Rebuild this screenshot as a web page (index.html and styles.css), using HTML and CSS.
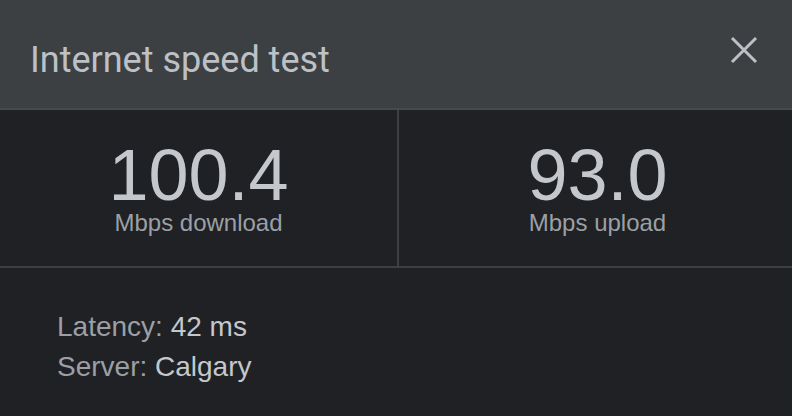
FILE: index.html
```html
<!DOCTYPE html>
<html>
<head>
<meta charset="utf-8">
<link rel="stylesheet" href="styles.css">
</head>
<body>
<div class="dialog">
  <header class="header">
    <h1 class="title">Internet speed test</h1>
    <button class="close" aria-label="Close">
      <svg width="28" height="28" viewBox="0 0 28 28"><path d="M2 2 L26 26 M26 2 L2 26" stroke="#bdc1c6" stroke-width="3" fill="none"/></svg>
    </button>
  </header>
  <section class="stats">
    <div class="stat">
      <div class="value">100.4</div>
      <div class="unit">Mbps download</div>
    </div>
    <div class="stat stat-right">
      <div class="value">93.0</div>
      <div class="unit">Mbps upload</div>
    </div>
  </section>
  <section class="details">
    <div class="row"><span class="label">Latency:</span> <span class="data">42 ms</span></div>
    <div class="row"><span class="label">Server:</span> <span class="data">Calgary</span></div>
  </section>
</div>
</body>
</html>
```
FILE: styles.css
```css
html, body {
  margin: 0;
  padding: 0;
  background: #202124;
}
.dialog {
  width: 792px;
  height: 416px;
  background: #202124;
  font-family: "Liberation Sans", Arial, sans-serif;
}
.header {
  box-sizing: border-box;
  height: 110px;
  background: #3c4043;
  border-bottom: 2px solid #47494d;
  display: flex;
  justify-content: space-between;
  align-items: flex-start;
  padding: 0 34px 0 30px;
}
.title {
  margin: 0;
  padding-top: 40px;
  font-family: Roboto, sans-serif;
  font-weight: 400;
  font-size: 36px;
  line-height: 40px;
  color: #bdc1c6;
}
.close {
  margin: 36px 0 0 0;
  padding: 0;
  border: 0;
  background: none;
  width: 28px;
  height: 28px;
  display: block;
}
.close svg {
  display: block;
}
.stats {
  display: grid;
  grid-template-columns: 397px 1fr;
  height: 156px;
  border-bottom: 2px solid #3c4043;
}
.stat {
  display: flex;
  flex-direction: column;
  align-items: center;
  padding-top: 29px;
}
.stat-right {
  border-left: 2px solid #3c4043;
  padding-left: 4px;
}
.value {
  font-size: 72px;
  line-height: 72px;
  color: #c4c7cb;
}
.unit {
  font-size: 24px;
  line-height: 24px;
  color: #9aa0a6;
}
.details {
  padding: 39px 0 0 57px;
  font-size: 28px;
  line-height: 40px;
}
.label {
  color: #9aa0a6;
}
.data {
  color: #c4c7cb;
}
```
